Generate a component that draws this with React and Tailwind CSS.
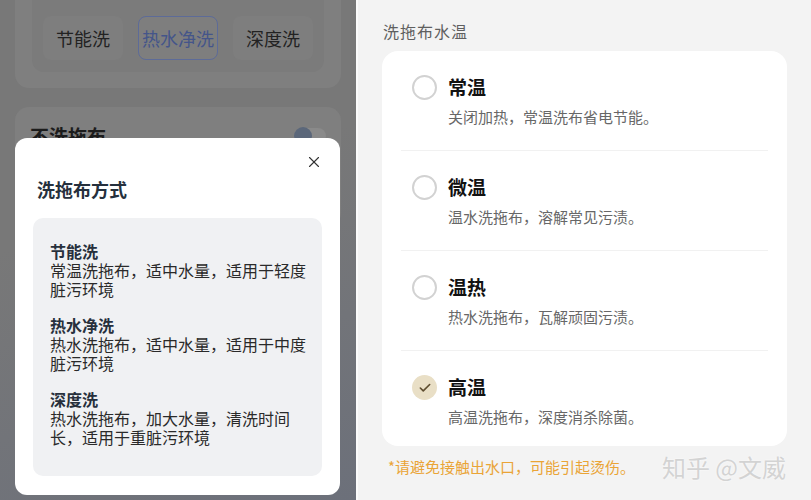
import { Check, X } from 'lucide-react';

const modes = [
  { name: '节能洗', desc: '常温洗拖布，适中水量，适用于轻度脏污环境' },
  { name: '热水净洗', desc: '热水洗拖布，适中水量，适用于中度脏污环境' },
  { name: '深度洗', desc: '热水洗拖布，加大水量，清洗时间长，适用于重脏污环境' },
];

const temps = [
  { name: '常温', desc: '关闭加热，常温洗布省电节能。' },
  { name: '微温', desc: '温水洗拖布，溶解常见污渍。' },
  { name: '温热', desc: '热水洗拖布，瓦解顽固污渍。' },
  { name: '高温', desc: '高温洗拖布，深度消杀除菌。', checked: true },
];

function LeftScreen() {
  return (
    <div className="relative w-[356px] h-[500px] shrink-0 overflow-hidden bg-[linear-gradient(160deg,#787878_40%,#6c707a)]">
      {/* dimmed page behind the sheet */}
      <div className="mx-[15px] -mt-[20px] h-[108px] rounded-[14px] bg-[#7f7f7f] px-[17px]">
        <div className="h-[92px] rounded-b-[12px] bg-[#7b7b7b] flex items-end justify-between px-[11px] pb-[12px]">
          <div className="w-[80px] h-[44px] rounded-[8px] bg-[#7e7e7e] flex items-center justify-center text-[18px] text-[#222]">
            节能洗
          </div>
          <div className="w-[80px] h-[44px] rounded-[8px] border border-[#5d6b98] bg-[#7e7e7e] flex items-center justify-center text-[18px] text-[#44558a]">
            热水净洗
          </div>
          <div className="w-[80px] h-[44px] rounded-[8px] bg-[#7e7e7e] flex items-center justify-center text-[18px] text-[#222]">
            深度洗
          </div>
        </div>
      </div>

      <div className="mx-[15px] mt-[19px] h-[120px] rounded-[14px] bg-[#7f7f7f] flex items-start justify-between px-[15px] pt-[16px]">
        <div className="text-[19px] font-bold leading-[26px] text-[#1c1c1c]">不洗拖布</div>
        <div className="mt-[5px] w-[32px] h-[16px] rounded-full bg-[#8a8a8a] flex items-center">
          <div className="w-[18px] h-[18px] rounded-full bg-[#5b677a]" />
        </div>
      </div>

      {/* bottom sheet */}
      <div className="absolute left-[15px] top-[138px] w-[325px] h-[357px] rounded-[12px] bg-white px-[18px] pt-[15px]">
        <div className="flex justify-end -mr-[1px]">
          <X className="w-[18px] h-[18px] text-[#333]" strokeWidth={1.5} />
        </div>
        <div className="mt-[5px] ml-[4px] text-[18px] font-bold leading-[26px] text-[#25303d]">洗拖布方式</div>
        <div className="mt-[16px] h-[258px] rounded-[10px] bg-[#f0f1f3] px-[17px] pt-[24px] flex flex-col gap-[17px]">
          {modes.map((m) => (
            <div key={m.name} className="w-[258px] text-[16px] leading-[19px]">
              <div className="font-bold text-[#27303c]">{m.name}</div>
              <div className="text-[#2a2a2a]">{m.desc}</div>
            </div>
          ))}
        </div>
      </div>
    </div>
  );
}

function Radio({ checked }) {
  if (checked) {
    return (
      <div className="w-[25px] h-[25px] rounded-full bg-[#e9dfc6] flex items-center justify-center shrink-0">
        <Check className="w-[14px] h-[14px] text-[#5e4d30]" strokeWidth={2.8} />
      </div>
    );
  }
  return <div className="w-[25px] h-[25px] rounded-full border-2 border-[#d2d2d2] shrink-0" />;
}

function RightScreen() {
  return (
    <div className="flex-1 h-[500px] bg-[#f3f3f3] border-l-2 border-[#fbfbfb] px-[24px] pt-[19px]">
      <div className="pl-[1px] text-[16px] leading-[24px] tracking-[1px] text-[#5f5f5f]">洗拖布水温</div>
      <div className="mt-[8px] rounded-[16px] bg-white px-[19px]">
        {temps.map((t, i) => (
          <div
            key={t.name}
            className={`flex items-start pl-[11px] pt-[23px] ${
              i < temps.length - 1 ? 'pb-[22px] border-b border-[#f1f1f1]' : 'pb-[18px]'
            }`}
          >
            <div className="mt-[1px]">
              <Radio checked={t.checked} />
            </div>
            <div className="ml-[11px]">
              <div className="text-[19px] font-bold leading-[26px] text-[#111]">{t.name}</div>
              <div className="mt-[6px] text-[15px] leading-[22px] text-[#676767]">{t.desc}</div>
            </div>
          </div>
        ))}
      </div>
      <div className="mt-[6px] flex items-center justify-between pl-[6px] pr-[1px]">
        <div className="text-[15px] leading-[22px] text-[#eaa436]">*请避免接触出水口，可能引起烫伤。</div>
        <div className="text-[24px] leading-[30px] text-[#d3d3d3] [text-shadow:0_0_2px_#ffffff]">知乎 @文威</div>
      </div>
    </div>
  );
}

export default function App() {
  return (
    <div className="flex w-[811px] h-[500px] overflow-hidden font-['Noto_Sans_CJK_SC','Noto_Sans',sans-serif]">
      <LeftScreen />
      <RightScreen />
    </div>
  );
}
